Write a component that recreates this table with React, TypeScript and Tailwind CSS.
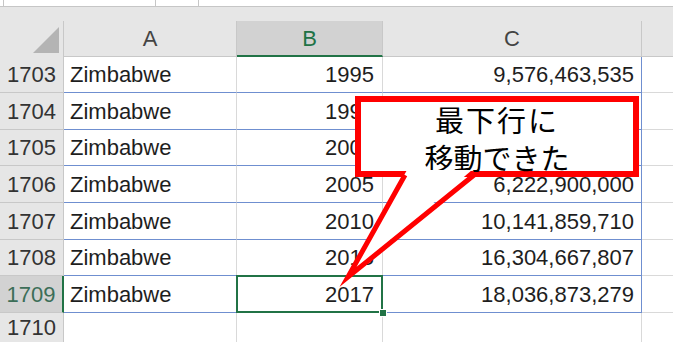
import React from "react";

type Row = { n: string; a: string; b: string; c: string; h: string; sel?: boolean };

const rows: Row[] = [
  { n: "1703", a: "Zimbabwe", b: "1995", c: "9,576,463,535", h: "h-[36px]" },
  { n: "1704", a: "Zimbabwe", b: "1999", c: "6,858,000,000", h: "h-[37px]" },
  { n: "1705", a: "Zimbabwe", b: "2000", c: "6,689,957,600", h: "h-[36px]" },
  { n: "1706", a: "Zimbabwe", b: "2005", c: "6,222,900,000", h: "h-[37px]" },
  { n: "1707", a: "Zimbabwe", b: "2010", c: "10,141,859,710", h: "h-[37px]" },
  { n: "1708", a: "Zimbabwe", b: "2015", c: "16,304,667,807", h: "h-[36px]" },
  { n: "1709", a: "Zimbabwe", b: "2017", c: "18,036,873,279", h: "h-[37px]", sel: true },
];

const font = { fontFamily: '"Liberation Sans", Arial, sans-serif' };

export default function App() {
  return (
    <div
      className="relative w-[673px] h-[347px] overflow-hidden bg-white text-[22px] text-[#1e1e1e]"
      style={font}
    >
      {/* top strip (formula bar bottom) */}
      <div className="flex h-[7px] bg-white border-b border-[#c6c6c6]">
        <div className="ml-[3px] w-[153px] border-l border-r border-[#c6c6c6]" />
        <div className="ml-[42px] w-[155px] border-l border-[#c6c6c6]" />
      </div>
      {/* gray gap */}
      <div className="h-[14px] bg-[#e6e6e6]" />
      {/* header row */}
      <div className="flex h-[36px] bg-[#e6e6e6] text-[#444444]">
        <div className="w-[64px] shrink-0 border-r border-[#c8c8c8] flex items-end justify-end pr-[4px] pb-[4px]">
          <svg width="26" height="26" viewBox="0 0 26 26">
            <polygon points="26,0 26,26 0,26" fill="#b4b4b4" />
          </svg>
        </div>
        <div className="w-[173px] shrink-0 border-r border-b border-[#c8c8c8] flex items-center justify-center">A</div>
        <div className="w-[146px] shrink-0 bg-[#d2d2d2] border-r border-[#c8c8c8] border-b-2 border-b-[#217346] text-[#217346] flex items-center justify-center">B</div>
        <div className="w-[259px] shrink-0 border-r border-b border-[#c8c8c8] flex items-center justify-center">C</div>
        <div className="flex-1 border-b border-[#c8c8c8]" />
      </div>
      {/* data rows */}
      {rows.map((r) => (
        <div key={r.n} className={`flex ${r.h}`}>
          <div
            className={
              r.sel
                ? "w-[64px] shrink-0 bg-[#d2d2d2] border-r-2 border-r-[#217346] border-b border-b-[#c8c8c8] text-[#3c6e58] flex items-center justify-center"
                : "w-[64px] shrink-0 bg-[#e6e6e6] border-r border-b border-[#c8c8c8] text-[#333333] flex items-center justify-center"
            }
          >
            {r.n}
          </div>
          <div className="w-[173px] shrink-0 border-r border-r-[#d9d9d9] border-b border-b-[#6f8fd0] flex items-center pl-[6px]">
            {r.a}
          </div>
          <div className="relative w-[146px] shrink-0 border-r border-r-[#d9d9d9] border-b border-b-[#6f8fd0] flex items-center justify-end pr-[8px]">
            {r.b}
            {r.sel && (
              <>
                <div className="absolute left-[-1px] top-[-1px] right-[-1px] bottom-[-1px] border-2 border-[#217346]" />
                <div className="absolute right-[-5px] bottom-[-5px] w-[8px] h-[8px] bg-[#217346] border border-white" />
              </>
            )}
          </div>
          <div className="w-[259px] shrink-0 border-r border-r-[#6f8fd0] border-b border-b-[#6f8fd0] flex items-center justify-end pr-[7px]">
            {r.c}
          </div>
          <div className="flex-1 border-b border-[#d9d9d9]" />
        </div>
      ))}
      {/* row 1710 */}
      <div className="flex h-[29px]">
        <div className="w-[64px] shrink-0 bg-[#e6e6e6] border-r border-[#c8c8c8] text-[#333333] flex items-center justify-center">
          1710
        </div>
        <div className="w-[173px] shrink-0 border-r border-[#d9d9d9]" />
        <div className="w-[146px] shrink-0 border-r border-[#d9d9d9]" />
        <div className="w-[259px] shrink-0 border-r border-[#d9d9d9]" />
        <div className="flex-1" />
      </div>

      {/* callout box */}
      <div
        className="absolute left-[355px] top-[96px] w-[284px] h-[81px] bg-white border-[6px] border-[#ff0000] flex flex-col items-center justify-center text-black text-[29px] leading-[38px]"
        style={{ fontFamily: '"Noto Sans CJK JP", "Noto Sans", sans-serif' }}
      >
        <div className="tracking-[2px] pt-[2px]">最下行に</div>
        <div>移動できた</div>
      </div>
      {/* callout tail */}
      <svg className="absolute left-0 top-0" width="673" height="347" viewBox="0 0 673 347">
        <polygon points="407,170 472,170 348,276" fill="#ffffff" />
        <polyline
          points="405,175 348,277 474,175"
          fill="none"
          stroke="#ff0000"
          strokeWidth="5"
          strokeLinejoin="miter"
          strokeMiterlimit="10"
        />
      </svg>
    </div>
  );
}
